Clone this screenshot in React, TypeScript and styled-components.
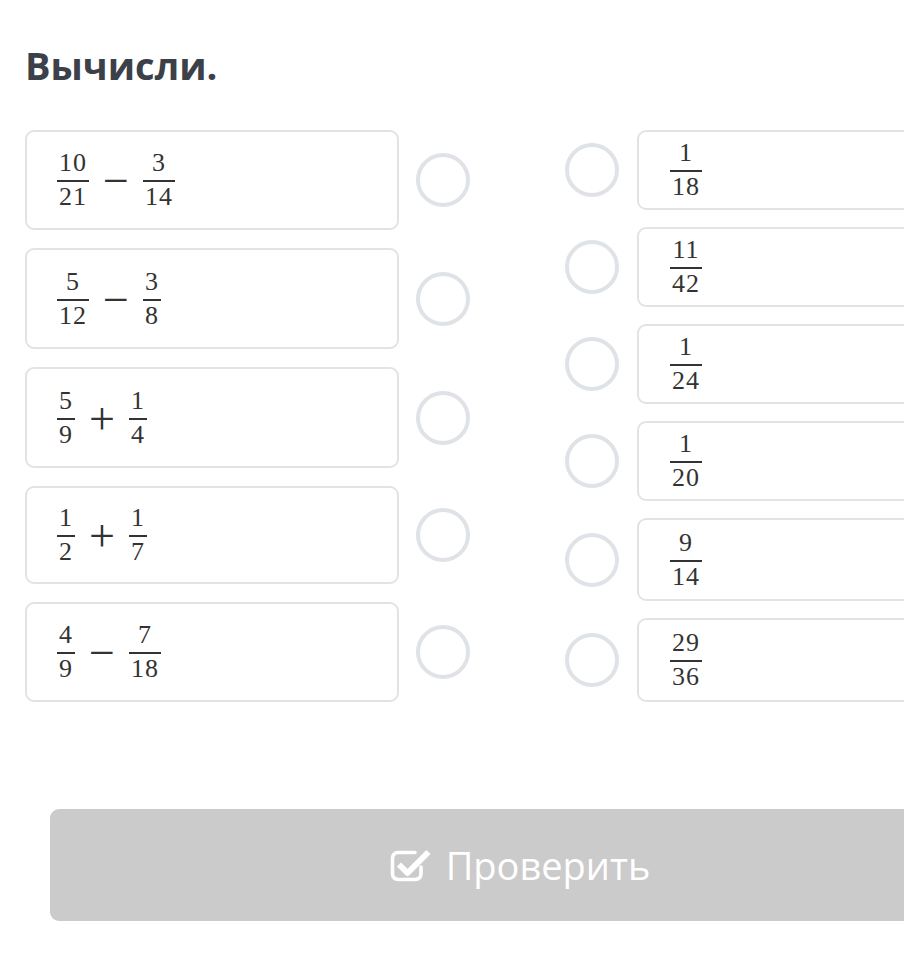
import React from "react";
import styled, { createGlobalStyle } from "styled-components";

const GlobalStyle = createGlobalStyle`
  html, body {
    margin: 0;
    padding: 0;
    background: #ffffff;
    overflow: hidden;
  }
  body {
    font-family: "Open Sans", "Liberation Sans", sans-serif;
  }
`;

const Page = styled.div`
  width: 904px;
  height: 964px;
  padding: 41px 0 0 25px;
  box-sizing: border-box;
  overflow: hidden;
`;

const Title = styled.h1`
  margin: 0 0 41px;
  font-size: 38px;
  line-height: 48px;
  font-weight: 700;
  color: #3c4049;
`;

const Board = styled.div`
  display: flex;
  align-items: flex-start;
  gap: 95px;
`;

const Column = styled.div<{ $gap: number }>`
  display: flex;
  flex-direction: column;
  gap: ${(p) => p.$gap}px;
`;

const Row = styled.div<{ $gap: number }>`
  display: flex;
  align-items: center;
  gap: ${(p) => p.$gap}px;
`;

const Card = styled.div<{ $h: number; $pad: number }>`
  flex: 0 0 auto;
  width: 374px;
  height: ${(p) => p.$h}px;
  box-sizing: border-box;
  border: 2px solid #e2e3e5;
  border-radius: 9px;
  background: #fff;
  display: flex;
  align-items: center;
  padding-left: ${(p) => p.$pad}px;
`;

const Radio = styled.div`
  flex: 0 0 auto;
  width: 54px;
  height: 54px;
  box-sizing: border-box;
  border: 4px solid #dfe2e6;
  border-radius: 50%;
`;

const Expr = styled.div`
  display: flex;
  align-items: center;
  gap: 14px;
  color: #333;
  font-family: "Liberation Serif", "DejaVu Serif", serif;
`;

const FracBox = styled.span`
  display: inline-flex;
  flex-direction: column;
  align-items: stretch;
  text-align: center;
`;

const Num = styled.span`
  font-size: 26px;
  line-height: 26px;
  padding: 0 2px;
  margin-bottom: 4px;
  letter-spacing: 1px;
`;

const Bar = styled.span`
  height: 2px;
  background: #333;
`;

const Den = styled.span`
  font-size: 26px;
  line-height: 26px;
  padding: 0 2px;
  margin-top: 2px;
  letter-spacing: 1px;
`;

const Op = styled.span`
  font-size: 46px;
  line-height: 46px;
  margin-top: 2px;
  color: #333;
`;

const CheckButton = styled.button`
  margin: 107px 0 0 25px;
  width: 934px;
  height: 112px;
  flex: 0 0 auto;
  border: none;
  border-radius: 9px;
  background: #cbcbcb;
  color: #fff;
  display: flex;
  align-items: center;
  justify-content: center;
  gap: 14px;
  font-family: "Open Sans", "Liberation Sans", sans-serif;
  font-size: 38px;
  padding: 0 0 0 6px;
`;

const Frac = ({ n, d }: { n: string; d: string }) => (
  <FracBox>
    <Num>{n}</Num>
    <Bar />
    <Den>{d}</Den>
  </FracBox>
);

const CheckIcon = () => (
  <svg width="42" height="34" viewBox="0 0 42 34" fill="none">
    <path
      d="M25 4.5H8a5.5 5.5 0 0 0-5.5 5.5v16a5.5 5.5 0 0 0 5.5 5.5h17.5a5.5 5.5 0 0 0 5.5-5.5v-7"
      stroke="#fff"
      strokeWidth="3.6"
      strokeLinecap="round"
    />
    <path d="M9 16.5l8.5 8.5L38.5 4" stroke="#fff" strokeWidth="6" strokeLinejoin="round" />
  </svg>
);

const tasks = [
  { h: 100, a: ["10", "21"], op: "−", b: ["3", "14"] },
  { h: 101, a: ["5", "12"], op: "−", b: ["3", "8"] },
  { h: 101, a: ["5", "9"], op: "+", b: ["1", "4"] },
  { h: 98, a: ["1", "2"], op: "+", b: ["1", "7"] },
  { h: 100, a: ["4", "9"], op: "−", b: ["7", "18"] },
];

const answers = [
  { h: 80, n: "1", d: "18" },
  { h: 80, n: "11", d: "42" },
  { h: 80, n: "1", d: "24" },
  { h: 80, n: "1", d: "20" },
  { h: 83, n: "9", d: "14" },
  { h: 84, n: "29", d: "36" },
];

export default function App() {
  return (
    <>
      <GlobalStyle />
      <Page>
        <Title>Вычисли.</Title>
        <Board>
          <Column $gap={18}>
            {tasks.map((t, i) => (
              <Row key={i} $gap={17}>
                <Card $h={t.h} $pad={30}>
                  <Expr>
                    <Frac n={t.a[0]} d={t.a[1]} />
                    <Op>{t.op}</Op>
                    <Frac n={t.b[0]} d={t.b[1]} />
                  </Expr>
                </Card>
                <Radio />
              </Row>
            ))}
          </Column>
          <Column $gap={17}>
            {answers.map((a, i) => (
              <Row key={i} $gap={18}>
                <Radio />
                <Card $h={a.h} $pad={31}>
                  <Expr>
                    <Frac n={a.n} d={a.d} />
                  </Expr>
                </Card>
              </Row>
            ))}
          </Column>
        </Board>
        <CheckButton type="button">
          <CheckIcon />
          <span>Проверить</span>
        </CheckButton>
      </Page>
    </>
  );
}
